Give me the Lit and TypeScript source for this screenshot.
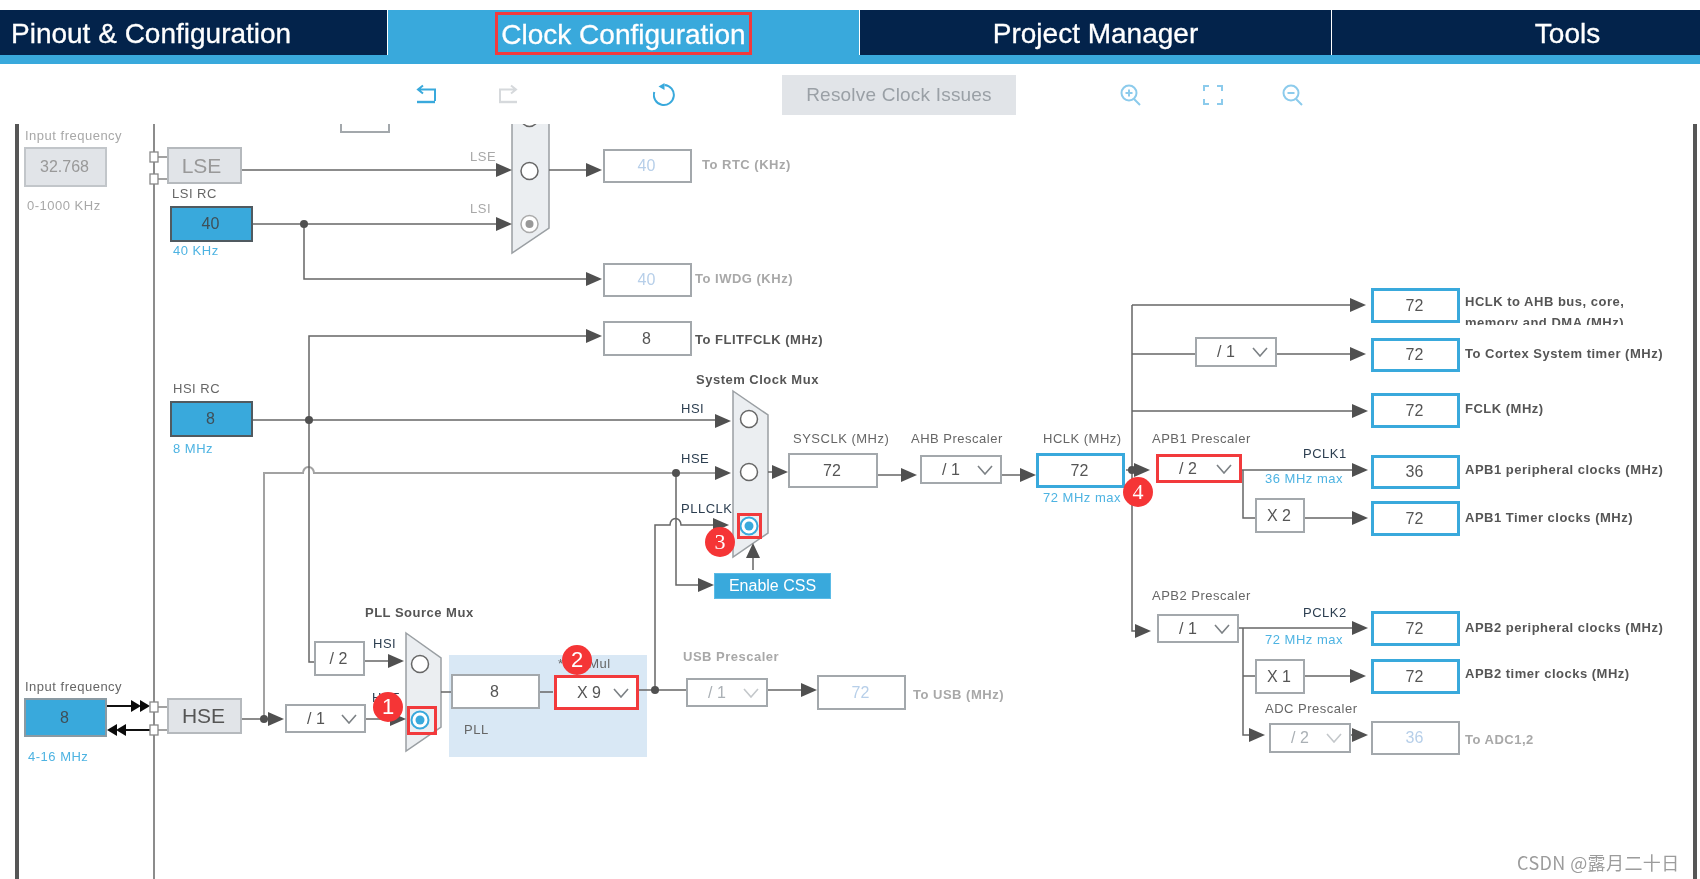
import { LitElement, html, css, svg } from "lit";
import { customElement } from "lit/decorators.js";

type Box = [number, number, number, number, string, string];
type Sel = [number, number, number, number, string, string];
type Lab = [number, number, string, string];

const TOP = 124;
const boxes: Box[] = [
  [24, 147, 107, 187, "32.768", "gray-in"],
  [167, 147, 242, 184, "LSE", "gray lse"],
  [170, 206, 253, 242, "40", "src"],
  [340, 100, 390, 133, "", "plain"],
  [603, 149, 692, 183, "40", "off"],
  [603, 263, 692, 297, "40", "off"],
  [603, 321, 692, 356, "8", "plain"],
  [170, 401, 253, 437, "8", "src"],
  [314, 641, 365, 676, "/ 2", "plain"],
  [24, 698, 107, 737, "8", "src soft"],
  [167, 698, 242, 734, "HSE", "gray hse"],
  [451, 674, 540, 709, "8", "plain"],
  [817, 675, 906, 710, "72", "off"],
  [788, 453, 878, 488, "72", "plain"],
  [1036, 453, 1125, 488, "72", "out"],
  [1371, 288, 1460, 323, "72", "out"],
  [1371, 338, 1460, 372, "72", "out"],
  [1371, 393, 1460, 428, "72", "out"],
  [1371, 455, 1460, 489, "36", "out"],
  [1255, 498, 1305, 533, "X 2", "plain"],
  [1371, 501, 1460, 536, "72", "out"],
  [1371, 611, 1460, 646, "72", "out"],
  [1255, 659, 1305, 694, "X 1", "plain"],
  [1371, 659, 1460, 694, "72", "out"],
  [1371, 721, 1460, 755, "36", "off"],
  [714, 573, 831, 599, "Enable CSS", "cta"],
];
const selects: Sel[] = [
  [285, 704, 366, 733, "/ 1", ""],
  [554, 675, 639, 710, "X 9", "red"],
  [686, 678, 768, 707, "/ 1", "dis"],
  [920, 455, 1002, 484, "/ 1", ""],
  [1195, 337, 1277, 367, "/ 1", ""],
  [1156, 454, 1242, 483, "/ 2", "red"],
  [1157, 614, 1239, 643, "/ 1", ""],
  [1269, 723, 1351, 753, "/ 2", "dis"],
];
const labels: Lab[] = [
  [25, 136, "Input frequency", "mute"],
  [27, 206, "0-1000 KHz", "mute"],
  [470, 157, "LSE", "mute"],
  [470, 209, "LSI", "mute"],
  [702, 164, "To RTC (KHz)", "bmute"],
  [695, 278, "To IWDG (KHz)", "bmute"],
  [172, 194, "LSI RC", "norm"],
  [173, 251, "40 KHz", "info"],
  [695, 339, "To FLITFCLK (MHz)", "bold"],
  [173, 389, "HSI RC", "norm"],
  [173, 449, "8 MHz", "info"],
  [696, 379, "System Clock Mux", "bold"],
  [681, 409, "HSI", "dark"],
  [681, 459, "HSE", "dark"],
  [681, 509, "PLLCLK", "dark"],
  [793, 439, "SYSCLK (MHz)", "norm"],
  [911, 439, "AHB Prescaler", "norm"],
  [1043, 439, "HCLK (MHz)", "norm"],
  [1043, 498, "72 MHz max", "info"],
  [365, 612, "PLL Source Mux", "bold"],
  [373, 644, "HSI", "dark"],
  [25, 687, "Input frequency", "norm"],
  [28, 757, "4-16 MHz", "info"],
  [372, 698, "HSE", "dark"],
  [464, 730, "PLL", "norm"],
  [558, 664, "*PLLMul", "norm"],
  [683, 656, "USB Prescaler", "bmute"],
  [913, 694, "To USB (MHz)", "bmute"],
  [1465, 301, "HCLK to AHB bus, core,", "bold"],
  [1465, 353, "To Cortex System timer (MHz)", "bold"],
  [1465, 408, "FCLK (MHz)", "bold"],
  [1152, 439, "APB1 Prescaler", "norm"],
  [1303, 454, "PCLK1", "dark"],
  [1265, 479, "36 MHz max", "info"],
  [1465, 469, "APB1 peripheral clocks (MHz)", "bold"],
  [1465, 517, "APB1 Timer clocks (MHz)", "bold"],
  [1152, 596, "APB2 Prescaler", "norm"],
  [1303, 613, "PCLK2", "dark"],
  [1265, 640, "72 MHz max", "info"],
  [1465, 627, "APB2 peripheral clocks (MHz)", "bold"],
  [1465, 673, "APB2 timer clocks (MHz)", "bold"],
  [1265, 709, "ADC Prescaler", "norm"],
  [1465, 739, "To ADC1,2", "bmute"],
];
const wires = [
  "M242 170H500", "M253 224H500", "M304 224V279H592", "M549 170H590",
  "M592 336H309V662H314", "M253 420H720", "M676 473V585H700",
  "M655 690V525H670a5 6 0 0 1 11 0H716", "M768 472H775", "M878 475H905",
  "M1002 475H1022", "M1126 470H1140", "M1132 305V631H1140", "M1132 305H1355",
  "M1132 354H1195", "M1277 354H1355", "M1132 411H1355", "M1242 470H1355",
  "M1243 470V518H1255", "M1305 518H1355", "M1239 628H1355", "M1243 628V735H1255",
  "M1243 676H1255", "M1305 676H1355", "M1350 735H1355", "M242 719H275",
  "M366 719H395", "M441 692H451", "M540 692H553", "M638 690H686", "M768 690H805",
  "M365 661H395", "M753 570V555",
  "M154 124V879",
];
const softWires = ["M264 719V473H303a5.5 6 0 0 1 11 0H720", "M158 157H167", "M158 179H167", "M158 707H167", "M158 730H167"];
const arrows: [number, number][] = [
  [512, 170], [512, 224], [602, 170], [602, 279], [602, 336], [731, 421], [731, 473], [729, 525],
  [714, 585], [788, 472], [917, 475], [1036, 475], [1150, 470], [1366, 305], [1366, 354], [1368, 411],
  [1368, 470], [1368, 518], [1151, 631], [1368, 628], [1366, 676], [1265, 735], [1368, 735],
  [284, 719], [406, 719], [404, 661], [817, 690],
];
const dots: [number, number][] = [[304, 224], [309, 420], [676, 473], [655, 690], [264, 719], [1132, 470]];
const muxes = ["512,88 549,115 549,228 512,253", "733,391 768,415 768,533 733,557", "406,633 441,658 441,727 406,751"];
const radios: [number, number, string][] = [
  [529.5, 118, ""], [529.5, 171, ""], [529.5, 224, "gray"],
  [749, 419, ""], [749, 472, ""], [749, 526, "on"],
  [420, 664, ""], [420, 720, "on"],
];
const pins: [number, number][] = [[154, 157], [154, 179], [154, 707], [154, 730]];
const marks: [number, number, number, number][] = [[737, 513, 762, 539], [407, 706, 437, 735]];
const badges: [number, number, string, string][] = [[388, 707, "1", ""], [577, 660, "2", ""], [720, 542, "3", "sf"], [1138, 492, "4", "sf"]];

@customElement("app-root")
export class AppRoot extends LitElement {
  static styles = css`
    :host { display: block; width: 1700px; height: 879px; overflow: hidden; background: #fff; font-family: "Liberation Sans", Arial, sans-serif; filter: blur(0.35px); }
    .nav { margin-top: 10px; display: grid; grid-template-columns: 388px repeat(3, 472px); height: 45px; border-bottom: 9px solid #39a9dc; overflow: hidden; width: 1700px; }
    .tab { background: #03234b; color: #fff; font-size: 28px; padding-top: 3px; display: flex; justify-content: center; align-items: center; border-right: 1px solid #fff; box-sizing: border-box; white-space: nowrap; -webkit-text-stroke: 0.3px #fff; }
    .tab.first { justify-content: flex-start; padding-left: 11px; }
    .tab.active { background: #39a9dc; padding-top: 0; }
    .tab .ring { border: 3px solid #f23a3c; padding: 0 3px; line-height: 40px; margin-top: 2px; display: block; height: 37px; box-sizing: content-box; }
    .bar { height: 60px; display: flex; align-items: center; padding-left: 415px; padding-top: 2px; box-sizing: border-box; }
    .bar svg { display: block; flex: none; fill: none; stroke-width: 2; }
    .ic-a { stroke: #39a9dc; }
    .ic-b { stroke: #d6d9dc; }
    .ic-c { stroke: #8ccbec; }
    .m-1 { margin-left: 60px; }
    .m-2 { margin-left: 134px; }
    .m-3 { margin-left: 105px; }
    .m-4 { margin-left: 104px; }
    .m-5 { margin-left: 60px; }
    .m-6 { margin-left: 58px; }
    .resolve { width: 234px; height: 40px; background: #e1e4e8; color: #9aa0a6; font-size: 19px; letter-spacing: 0.2px; display: flex; align-items: center; justify-content: center; white-space: nowrap; }
    .canvas { position: relative; width: 1700px; height: 755px; overflow: hidden; }
    .wires { position: absolute; left: 0; top: -124px; width: 1700px; height: 879px; }
    .rail { position: absolute; top: 0; bottom: 0; width: 4px; background: #565656; }
    .rail.l { left: 15px; }
    .rail.r { left: 1693px; }
    .pll { position: absolute; background: #d9e8f5; }
    .node { position: absolute; box-sizing: border-box; display: flex; align-items: center; justify-content: center; padding-right: 2px; font-size: 16px; color: #555; border: 2px solid #a3a8ac; background: #fff; }
    .node.off { color: #b7cfe9; }
    .node.out { border: 3px solid #39a9dc; }
    .node.src { background: #39a9dc; border-color: #505a60; color: #3f4f58; }
    .node.src.soft { border-color: #8a9aa3; }
    .node.gray-in { background: #e1e4e8; border-color: #c2c6ca; color: #999; }
    .node.gray { background: #e1e4e8; border-color: #b5b9bd; }
    .node.lse { color: #999; font-size: 21px; padding-right: 6px; }
    .node.hse { color: #555; font-size: 21px; padding-right: 2px; }
    .node.cta { background: #39a9dc; border: 1px solid #5cbbe6; color: #fff; font-size: 16px; padding-right: 0; }
    .sel { justify-content: flex-start; padding-left: 20px; }
    .sel svg { position: absolute; right: 7px; top: 50%; margin-top: -5px; fill: none; stroke: #7c8185; stroke-width: 1.6; }
    .sel.red { border: 3px solid #f23a3c; }
    .sel.dis { color: #aab0b5; }
    .sel.dis svg { stroke: #c4c8cb; }
    .lab { position: absolute; height: 16px; line-height: 16px; font-size: 13px; letter-spacing: 0.5px; white-space: nowrap; }
    .mute { color: #a8a8a8; }
    .norm { color: #666; }
    .dark { color: #2c3e50; }
    .info { color: #4db3e2; }
    .bold { color: #555; font-weight: bold; letter-spacing: 0.5px; margin-top: 1px; }
    .bmute { color: #a8a8a8; font-weight: bold; letter-spacing: 0.5px; margin-top: 1px; }
    .clip { position: absolute; left: 1465px; top: 190px; height: 10px; line-height: 15px; overflow: hidden; font-size: 13px; white-space: nowrap; }
    .mark { position: absolute; box-sizing: border-box; border: 3px solid #f23a3c; }
    .badge { position: absolute; width: 30px; height: 30px; border-radius: 50%; background: #f53536; color: #fff; font: 22px "Liberation Sans", sans-serif; display: flex; align-items: center; justify-content: center; }
    .badge.sf { font-family: "Liberation Serif", serif; }
    .wm { position: absolute; left: 1517px; top: 725px; font: 18px "Noto Sans CJK SC", "Liberation Sans", sans-serif; color: #9c9c9c; white-space: nowrap; letter-spacing: 0.4px; }
    .w { fill: none; stroke: #666; stroke-width: 1.5; }
    .ws { fill: none; stroke: #a2a2a2; stroke-width: 2; }
    .wb { fill: none; stroke: #111; stroke-width: 2; }
    .ar { fill: #505050; }
    .arb { fill: #0a0a0a; }
    .mx { fill: #ebeef1; stroke: #9a9fa3; stroke-width: 1.5; }
    .rd { fill: #fff; stroke: #666; stroke-width: 1.5; }
    .rd.gray { stroke: #aaa; }
    .rd.on { stroke: #39a9dc; stroke-width: 2; }
    .rdot { fill: #39a9dc; }
    .rdot.gray { fill: #999; }
    .pin { fill: #fff; stroke: #888; stroke-width: 1.3; }
  `;

  private pos(x1: number, y1: number, x2: number, y2: number) {
    return `left:${x1}px;top:${y1 - TOP}px;width:${x2 - x1}px;height:${y2 - y1}px`;
  }

  private tri(x: number, y: number) {
    return svg`<polygon class="ar" points="${x},${y} ${x - 16},${y - 7} ${x - 16},${y + 7}"></polygon>`;
  }

  private toolbar() {
    return html`<div class="bar">
      <svg class="ic-a" width="22" height="22" viewBox="0 0 22 22"><path d="M8 1.5 3 5.5 8 9.5M3 5.5H20V17"></path><path d="M2 18H20" stroke-width="2.4"></path></svg>
      <svg class="ic-b m-1" width="22" height="22" viewBox="0 0 22 22"><path d="M14 1.5 19 5.5 14 9.5M19 5.5H3V17"></path><path d="M2 18H20" stroke-width="2.4"></path></svg>
      <svg class="ic-a m-2" width="24" height="24" viewBox="0 0 24 24" stroke-width="2.2"><path d="M11.5 2A10 10 0 1 1 1.3 9"></path><path d="M11.5 0V7L5.5 3.5Z" fill="#39a9dc" stroke="none"></path></svg>
      <div class="resolve m-3">Resolve Clock Issues</div>
      <svg class="ic-c m-4" width="22" height="22" viewBox="0 0 22 22"><circle cx="9" cy="9" r="7.5"></circle><path d="M14 15l6 6M9 5.5v7M5.5 9h7"></path></svg>
      <svg class="ic-c m-5" width="22" height="22" viewBox="0 0 22 22"><path d="M2 7V2H7M15 2H20V7M20 15V20H15M7 20H2V15"></path></svg>
      <svg class="ic-c m-6" width="22" height="22" viewBox="0 0 22 22"><circle cx="9" cy="9" r="7.5"></circle><path d="M14 15l6 6M5.5 9h7"></path></svg>
    </div>`;
  }

  private wiring() {
    return html`<svg class="wires" viewBox="0 0 1700 879">
      ${muxes.map((p) => svg`<polygon class="mx" points="${p}"></polygon>`)}
      ${softWires.map((d) => svg`<path class="ws" d="${d}"></path>`)}
      ${wires.map((d) => svg`<path class="w" d="${d}"></path>`)}
      <path class="wb" d="M107 706H135M126 730H150"></path>
      ${arrows.map(([x, y]) => this.tri(x, y))}
      <polygon class="ar" points="753,543 746,558 760,558"></polygon>
      <polygon class="arb" points="141,706 131,700 131,712"></polygon>
      <polygon class="arb" points="150,706 140,700 140,712"></polygon>
      <polygon class="arb" points="107,730 117,724 117,736"></polygon>
      <polygon class="arb" points="116,730 126,724 126,736"></polygon>
      ${dots.map(([x, y]) => svg`<circle class="ar" cx="${x}" cy="${y}" r="4"></circle>`)}
      ${pins.map(([x, y]) => svg`<rect class="pin" x="${x - 4}" y="${y - 5}" width="8" height="10"></rect>`)}
      ${radios.map(([x, y, k]) => svg`<circle class="rd ${k}" cx="${x}" cy="${y}" r="8.5"></circle>
        ${k ? svg`<circle class="rdot ${k}" cx="${x}" cy="${y}" r="${k === "on" ? 4.5 : 4}"></circle>` : ""}`)}
    </svg>`;
  }

  render() {
    return html`
      <div class="nav">
        <div class="tab first">Pinout &amp; Configuration</div>
        <div class="tab active"><span class="ring">Clock Configuration</span></div>
        <div class="tab">Project Manager</div>
        <div class="tab">Tools</div>
      </div>
      ${this.toolbar()}
      <div class="canvas">
        <div class="rail l"></div>
        <div class="rail r"></div>
        <div class="pll" style=${this.pos(449, 655, 647, 757)}></div>
        ${this.wiring()}
        ${boxes.map(([a, b, c, d, t, k]) => html`<div class="node ${k}" style=${this.pos(a, b, c, d)}>${t}</div>`)}
        ${selects.map(([a, b, c, d, t, k]) => html`<div class="node sel ${k}" style=${this.pos(a, b, c, d)}>${t}
          <svg width="16" height="10" viewBox="0 0 16 10"><path d="M1 1l7 8 7-8"></path></svg></div>`)}
        ${labels.map(([x, y, t, k]) => html`<div class="lab ${k}" style="left:${x}px;top:${y - TOP - 8}px">${t}</div>`)}
        <div class="clip bold">memory and DMA (MHz)</div>
        ${marks.map(([a, b, c, d]) => html`<div class="mark" style=${this.pos(a, b, c, d)}></div>`)}
        ${badges.map(([x, y, t, k]) => html`<div class="badge ${k}" style="left:${x - 15}px;top:${y - TOP - 15}px">${t}</div>`)}
        <div class="wm">CSDN @露月二十日</div>
      </div>
    `;
  }
}
